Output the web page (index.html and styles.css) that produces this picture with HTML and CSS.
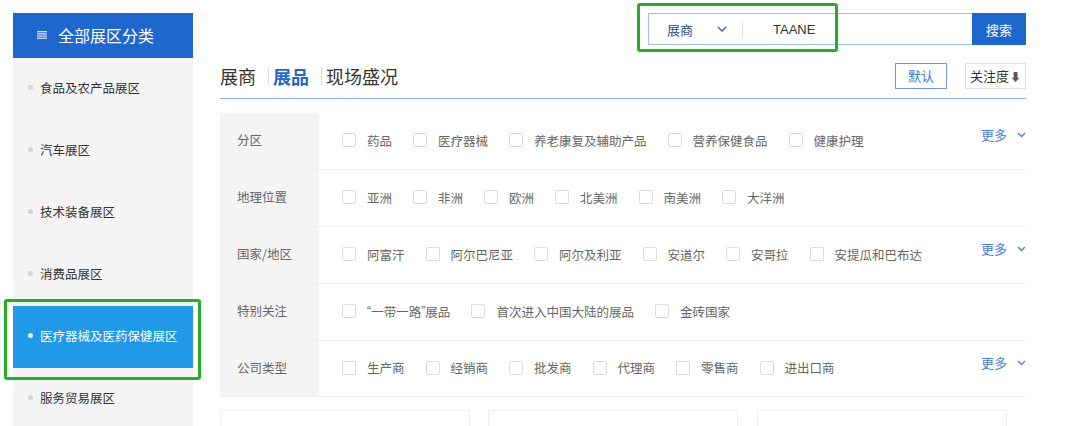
FILE: index.html
```html
<!DOCTYPE html>
<html lang="zh">
<head>
<meta charset="utf-8">
<link rel="stylesheet" href="styles.css">
</head>
<body>
<div class="page">
  <aside class="sidebar">
    <div class="side-head">
      <svg class="menu-ic" width="10" height="8" viewBox="0 0 10 8"><g fill="#cfe0f7"><rect x="0" y="0" width="10" height="1.3"/><rect x="0" y="2.2" width="10" height="1.3"/><rect x="0" y="4.4" width="10" height="1.3"/><rect x="0" y="6.6" width="10" height="1.3"/></g></svg>
      <span>全部展区分类</span>
    </div>
    <ul class="side-list">
      <li class="side-item">食品及农产品展区</li>
      <li class="side-item">汽车展区</li>
      <li class="side-item">技术装备展区</li>
      <li class="side-item">消费品展区</li>
      <li class="side-item active">医疗器械及医药保健展区</li>
      <li class="side-item">服务贸易展区</li>
    </ul>
  </aside>
  <main class="main">
    <div class="search-row">
      <div class="search">
        <div class="search-type">展商
          <svg class="chev" width="10" height="6" viewBox="0 0 10 6"><path d="M1 1 L5 5 L9 1" fill="none" stroke="#4a6fa8" stroke-width="1.6"/></svg>
        </div>
        <div class="search-div"></div>
        <div class="search-input">TAANE</div>
        <button class="search-btn">搜索</button>
      </div>
    </div>
    <div class="tabs-row">
      <div class="tabs">
        <span class="tab">展商</span>
        <span class="tab-sep"></span>
        <span class="tab on">展品</span>
        <span class="tab-sep"></span>
        <span class="tab">现场盛况</span>
      </div>
      <div class="sorts">
        <span class="sort-btn blue">默认</span>
        <span class="sort-btn">关注度<span class="arr">⬇</span></span>
      </div>
    </div>
    <div class="filters">
      <div class="frow">
        <div class="flabel">分区</div>
        <div class="fitems">
          <span class="fitem"><i class="cb"></i>药品</span>
          <span class="fitem"><i class="cb"></i>医疗器械</span>
          <span class="fitem"><i class="cb"></i>养老康复及辅助产品</span>
          <span class="fitem"><i class="cb"></i>营养保健食品</span>
          <span class="fitem"><i class="cb"></i>健康护理</span>
        </div>
        <div class="more">更多<svg width="9" height="6" viewBox="0 0 9 6"><path d="M1 1 L4.5 4.5 L8 1" fill="none" stroke="#4a80d8" stroke-width="1.4"/></svg></div>
      </div>
      <div class="frow">
        <div class="flabel">地理位置</div>
        <div class="fitems">
          <span class="fitem"><i class="cb"></i>亚洲</span>
          <span class="fitem"><i class="cb"></i>非洲</span>
          <span class="fitem"><i class="cb"></i>欧洲</span>
          <span class="fitem"><i class="cb"></i>北美洲</span>
          <span class="fitem"><i class="cb"></i>南美洲</span>
          <span class="fitem"><i class="cb"></i>大洋洲</span>
        </div>
      </div>
      <div class="frow">
        <div class="flabel">国家/地区</div>
        <div class="fitems">
          <span class="fitem"><i class="cb"></i>阿富汗</span>
          <span class="fitem"><i class="cb"></i>阿尔巴尼亚</span>
          <span class="fitem"><i class="cb"></i>阿尔及利亚</span>
          <span class="fitem"><i class="cb"></i>安道尔</span>
          <span class="fitem"><i class="cb"></i>安哥拉</span>
          <span class="fitem"><i class="cb"></i>安提瓜和巴布达</span>
        </div>
        <div class="more">更多<svg width="9" height="6" viewBox="0 0 9 6"><path d="M1 1 L4.5 4.5 L8 1" fill="none" stroke="#4a80d8" stroke-width="1.4"/></svg></div>
      </div>
      <div class="frow">
        <div class="flabel">特别关注</div>
        <div class="fitems">
          <span class="fitem"><i class="cb"></i><span class="q">“</span>一带一路<span class="q">”</span>展品</span>
          <span class="fitem"><i class="cb"></i>首次进入中国大陆的展品</span>
          <span class="fitem"><i class="cb"></i>金砖国家</span>
        </div>
      </div>
      <div class="frow last">
        <div class="flabel">公司类型</div>
        <div class="fitems">
          <span class="fitem"><i class="cb"></i>生产商</span>
          <span class="fitem"><i class="cb"></i>经销商</span>
          <span class="fitem"><i class="cb"></i>批发商</span>
          <span class="fitem"><i class="cb"></i>代理商</span>
          <span class="fitem"><i class="cb"></i>零售商</span>
          <span class="fitem"><i class="cb"></i>进出口商</span>
        </div>
        <div class="more">更多<svg width="9" height="6" viewBox="0 0 9 6"><path d="M1 1 L4.5 4.5 L8 1" fill="none" stroke="#4a80d8" stroke-width="1.4"/></svg></div>
      </div>
    </div>
    <div class="cards">
      <div class="card"></div>
      <div class="card"></div>
      <div class="card"></div>
    </div>
  </main>
</div>
<div class="mark mark-side"></div>
<div class="mark mark-search"></div>
</body>
</html>
```

FILE: styles.css
```css
* { box-sizing: border-box; }
html, body { margin: 0; padding: 0; background: #fff; }
body {
  width: 1080px; height: 426px; overflow: hidden; position: relative;
  font-family: "Noto Sans CJK SC", "Noto Sans", "Liberation Sans", sans-serif;
  color: #333;
}
.page { display: flex; padding-left: 13px; gap: 27px; height: 426px; overflow: hidden; }

.sidebar { width: 180px; margin-top: 13px; background: #f4f4f4; height: 420px; flex: none; }
.side-head {
  height: 45px; background: #1f67cd; color: #fff;
  display: flex; align-items: center; padding-left: 24px; gap: 11px;
  font-size: 16px; padding-bottom: 1px;
}
.menu-ic { display: block; }
.side-list { list-style: none; margin: 0; padding: 0; }
.side-item {
  height: 62px; display: flex; align-items: center;
  padding-left: 15px; padding-bottom: 3px; font-size: 12.5px; color: #333;
  white-space: nowrap;
}
.side-item::before {
  content: ""; width: 5px; height: 5px; border-radius: 50%;
  background: #d4d4d4; margin-right: 7px; flex: none;
}
.side-item.active { background: #2199e8; color: #fff; }
.side-item.active::before { background: #e8f2fc; }

.main { width: 806px; padding-top: 13px; flex: none; }
.search-row { display: flex; justify-content: flex-end; }
.search {
  width: 378px; height: 32px; display: flex; align-items: center;
  border: 1px solid #a9c0e6; border-right: none;
}
.search-type {
  width: 93px; display: flex; align-items: center;
  padding-left: 18px; font-size: 13px; color: #2d4f8e;
}
.chev { margin-left: 24px; }
.search-div { width: 1px; height: 18px; background: #e2e2e2; }
.search-input { flex: 1; padding-left: 30px; font-size: 13px; color: #333; font-family: "Liberation Sans", "Noto Sans CJK SC", sans-serif; }
.search-btn {
  width: 54px; height: 32px; margin-top: -1px; margin-bottom: -1px;
  border: none; background: #1f67cd; color: #fff; font-size: 13px;
  font-family: "Noto Sans CJK SC", sans-serif; padding: 0;
}

.tabs-row {
  margin-top: 18px; height: 36px; padding-bottom: 9px;
  display: flex; justify-content: space-between; align-items: flex-start;
  border-bottom: 1px solid #8fb1e9;
}
.tabs { display: flex; align-items: center; height: 26px; }
.tab { font-size: 18px; color: #333; padding-right: 12px; line-height: 26px; }
.tab-sep { width: 1px; height: 18px; background: #ddd; margin-right: 4px; }
.tab.on { color: #1f67cd; font-weight: bold; }
.sorts { display: flex; gap: 18px; }
.sort-btn {
  height: 26px; display: flex; align-items: center; justify-content: center;
  border: 1px solid #ddd; font-size: 13px; color: #333; width: 61px; white-space: nowrap;
  padding-bottom: 1px;
}
.sort-btn.blue { border-color: #6f9ad9; color: #3d79d0; width: 52px; }
.arr { font-size: 11px; color: #555; margin-left: 1px; }

.filters { margin-top: 14px; }
.frow {
  display: flex; height: 57px; border-bottom: 1px solid #efefef; position: relative;
}
.frow.last { height: 56px; }
.flabel {
  width: 99px; background: #f4f4f4; display: flex; align-items: center;
  padding-left: 17px; padding-bottom: 3px; font-size: 12.5px; color: #666; flex: none;
}
.fitems { display: flex; align-items: center; padding-left: 23px; padding-bottom: 2px; flex: 1; }
.fitem { display: flex; align-items: center; font-size: 12.5px; color: #666; margin-right: 21px; white-space: nowrap; }
.q { font-family: "Liberation Sans", sans-serif; }
.cb {
  width: 14px; height: 14px; border: 1px solid #dcdcdc; border-radius: 2px;
  margin-right: 11px; background: #fff; flex: none;
}
.more {
  position: absolute; right: 0; top: 12px;
  display: flex; align-items: center; gap: 10px;
  font-size: 13px; color: #4a80d8;
}

.cards { display: flex; gap: 18px; margin-top: 13px; }
.card { width: 250px; height: 100px; border: 1px solid #eee; flex: none; }
.card + .card + .card { margin-left: 1px; }

.mark { position: absolute; border: 3px solid #27ad27; border-radius: 3px; }
.mark-side { left: 4px; top: 299px; width: 197px; height: 81px; }
.mark-search { left: 637px; top: 3px; width: 201px; height: 49px; }
```
